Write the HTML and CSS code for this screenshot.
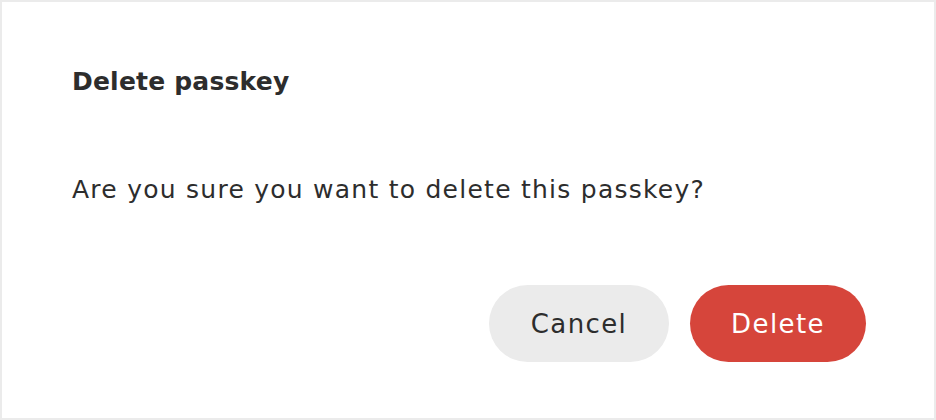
FILE: index.html
```html
<!DOCTYPE html>
<html lang="en">
<head>
<meta charset="utf-8">
<title>Delete passkey</title>
<link rel="stylesheet" href="styles.css">
</head>
<body>
<div class="dialog">
  <h2 class="title">Delete passkey</h2>
  <p class="message">Are you sure you want to delete this passkey?</p>
  <div class="actions">
    <button class="btn btn-cancel">Cancel</button>
    <button class="btn btn-delete">Delete</button>
  </div>
</div>
</body>
</html>
```
FILE: styles.css
```css
* { box-sizing: border-box; }
html, body { margin: 0; padding: 0; background: #fff; }
body {
  font-family: "DejaVu Sans", "Noto Sans", sans-serif;
  color: #2d2d2d;
}
.dialog {
  width: 936px;
  height: 420px;
  border: 2px solid #ebebeb;
  padding: 58px 68px 0 70px;
  display: flex;
  flex-direction: column;
}
.title {
  margin: 0;
  font-size: 25px;
  line-height: 44px;
  font-weight: 700;
  letter-spacing: 0.2px;
}
.message {
  margin: 64px 0 0;
  font-size: 25px;
  line-height: 44px;
  font-weight: 400;
  letter-spacing: 1.25px;
}
.actions {
  margin-top: 73px;
  display: flex;
  justify-content: flex-end;
  gap: 21px;
}
.btn {
  height: 77px;
  border: none;
  border-radius: 39px;
  font-family: inherit;
  font-size: 26px;
  letter-spacing: 1.4px;
  padding: 0;
}
.btn-cancel {
  width: 180px;
  background: #ebebeb;
  color: #2d2d2d;
}
.btn-delete {
  width: 176px;
  background: #d6453b;
  color: #fff;
}
```
